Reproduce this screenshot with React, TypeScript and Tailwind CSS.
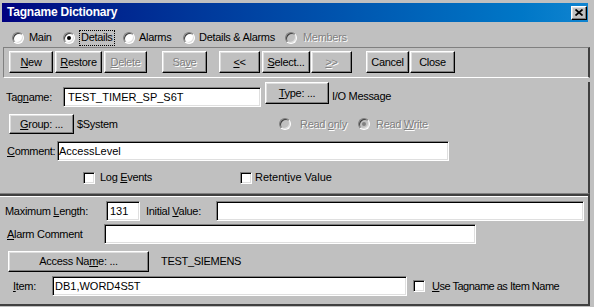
import type { ReactNode } from 'react'

const raised =
  'border border-t-white border-l-white border-r-black border-b-black shadow-[inset_-1px_-1px_#808080,inset_1px_1px_#dfdfdf]'
const sunken =
  'border border-t-[#808080] border-l-[#808080] border-r-white border-b-white shadow-[inset_1px_1px_#000,inset_-1px_-1px_#dfdfdf]'
const dim = 'text-[#808080] [text-shadow:1px_1px_0_#fff]'

function Btn({ children, className = '', disabled }: { children: ReactNode; className?: string; disabled?: boolean }) {
  return (
    <div
      className={`flex items-center justify-center shrink-0 bg-[#c0c0c0] ${raised} ${disabled ? dim : ''} ${className}`}
    >
      {children}
    </div>
  )
}

function Field({ value, className = '' }: { value?: string; className?: string }) {
  return (
    <div className={`flex items-center shrink-0 h-[20px] bg-white tracking-normal ${sunken} ${className}`}>
      {value}
    </div>
  )
}

function Radio({ checked, disabled }: { checked?: boolean; disabled?: boolean }) {
  return (
    <span
      className={`relative block w-[12px] h-[12px] rounded-full shrink-0 border border-t-[#808080] border-l-[#808080] border-r-white border-b-white shadow-[inset_1px_1px_0_#404040,inset_-1px_-1px_0_#dfdfdf] ${
        disabled ? 'bg-[#c0c0c0]' : 'bg-white'
      }`}
    >
      {checked && (
        <span
          className={`absolute left-[3px] top-[3px] w-[4px] h-[4px] rounded-full ${disabled ? 'bg-[#808080]' : 'bg-black'}`}
        />
      )}
    </span>
  )
}

function Check() {
  return <span className={`block w-[12px] h-[12px] shrink-0 bg-white ${sunken}`} />
}

export default function App() {
  return (
    <div className="w-[594px] h-[307px] bg-[#c0c0c0] overflow-hidden text-[11px] leading-[13px] text-black tracking-[-0.3px] font-['Liberation_Sans',Arial,sans-serif]">
      {/* title bar */}
      <div className="pt-[3px] pl-[2px] pr-[6px]">
        <div className="h-[19px] flex items-center bg-gradient-to-r from-[#000080] to-[#1084d0] pl-[5px] pr-[1px]">
          <span className="flex-1 text-white font-bold text-[12px] tracking-[-0.2px]">Tagname Dictionary</span>
          <Btn className="w-[16px] h-[14px]">
            <svg width="8" height="7" viewBox="0 0 8 7">
              <path d="M0.5 0.5 L7.5 6.5 M7.5 0.5 L0.5 6.5" stroke="#000" strokeWidth="1.7" />
            </svg>
          </Btn>
        </div>
      </div>

      {/* view radios */}
      <div className="flex items-center h-[19px] mt-[6px] pl-[12px]">
        <div className="flex items-center w-[51px]">
          <Radio />
          <span className="ml-[5px]">Main</span>
        </div>
        <div className="flex items-center w-[60px]">
          <Radio checked />
          <span className="ml-[4px] h-[16px] px-[1px] flex items-center border border-dotted border-black">Details</span>
        </div>
        <div className="flex items-center w-[60px]">
          <Radio />
          <span className="ml-[4px]">Alarms</span>
        </div>
        <div className="flex items-center w-[102px]">
          <Radio />
          <span className="ml-[4px]">Details &amp; Alarms</span>
        </div>
        <div className="flex items-center">
          <Radio disabled />
          <span className={`ml-[6px] ${dim}`}>Members</span>
        </div>
      </div>

      {/* toolbar */}
      <div className="ml-[3px] w-[587px] h-[31px] border-t border-l border-t-[#808080] border-l-[#808080] border-b border-b-white border-r-2 border-r-[#404040] pt-[3px] pl-[5px] flex">
        <Btn className="w-[44px] h-[22px]">
          <span><u>N</u>ew</span>
        </Btn>
        <Btn className="w-[47px] h-[22px] ml-[2px]">
          <span><u>R</u>estore</span>
        </Btn>
        <Btn className="w-[43px] h-[22px] ml-[2px]" disabled>
          <span><u>D</u>elete</span>
        </Btn>
        <Btn className="w-[45px] h-[22px] ml-[15px]" disabled>
          <span>Sa<u>v</u>e</span>
        </Btn>
        <Btn className="w-[41px] h-[22px] ml-[12px]">
          <span><u>&lt;</u>&lt;</span>
        </Btn>
        <Btn className="w-[48px] h-[22px] ml-[2px]">
          <span><u>S</u>elect...</span>
        </Btn>
        <Btn className="w-[41px] h-[22px] ml-[1px]" disabled>
          <span><u>&gt;</u>&gt;</span>
        </Btn>
        <Btn className="w-[43px] h-[22px] ml-[14px]">
          <span>Cancel</span>
        </Btn>
        <Btn className="w-[45px] h-[22px] ml-[1px]">
          <span>Close</span>
        </Btn>
      </div>

      {/* tag details */}
      <div className="w-[590px] h-[112px] border-r-2 border-r-[#404040] border-b border-b-[#808080]">
        <div className="flex items-start h-[25px] mt-[4px]">
          <span className="ml-[6px] w-[57px] mt-[9px]">
            Tag<u>n</u>ame:
          </span>
          <Field value="TEST_TIMER_SP_S6T" className="w-[198px] mt-[5px] pl-[4px]" />
          <Btn className="w-[64px] h-[22px] ml-[4px]">
            <span><u>T</u>ype: ...</span>
          </Btn>
          <span className="ml-[3px] mt-[8px]">I/O Message</span>
        </div>

        <div className="flex items-center h-[20px] mt-[7px]">
          <Btn className="w-[65px] h-[20px] ml-[9px]">
            <span><u>G</u>roup: ...</span>
          </Btn>
          <span className="ml-[3px] w-[202px]">$System</span>
          <Radio disabled />
          <span className={`ml-[9px] w-[58px] ${dim}`}>
            Read <u>o</u>nly
          </span>
          <Radio checked disabled />
          <span className={`ml-[6px] ${dim}`}>
            Read <u>W</u>rite
          </span>
        </div>

        <div className="flex items-center h-[20px] mt-[7px]">
          <span className="ml-[7px] w-[50px]">
            <u>C</u>omment:
          </span>
          <Field value="AccessLevel" className="w-[392px] pl-[1px]" />
        </div>

        <div className="flex items-center h-[13px] mt-[10px]">
          <div className="flex items-center ml-[83px] w-[157px]">
            <Check />
            <span className="ml-[5px]">
              Log <u>E</u>vents
            </span>
          </div>
          <Check />
          <span className="ml-[3px] tracking-[0px]">
            Retent<u>i</u>ve Value
          </span>
        </div>
      </div>

      {/* io section */}
      <div className="w-[590px] h-[112px] border-t-2 border-t-[#404040] border-r-2 border-r-[#404040] border-b-2 border-b-[#404040] shadow-[inset_0_1px_0_#fff]">
        <div className="flex items-center h-[20px] mt-[5px]">
          <span className="ml-[5px] w-[101px]">
            Maximum <u>L</u>ength:
          </span>
          <Field value="131" className="w-[34px] pl-[3px]" />
          <span className="ml-[6px] w-[70px]">
            Initial <u>V</u>alue:
          </span>
          <Field className="w-[368px]" />
        </div>

        <div className="flex items-center h-[20px] mt-[3px]">
          <span className="ml-[7px] w-[97px]">
            <u>A</u>larm Comment
          </span>
          <Field className="w-[372px]" />
        </div>

        <div className="flex items-center h-[21px] mt-[7px]">
          <Btn className="w-[141px] h-[21px] ml-[8px]">
            <span>
              Access Na<u>m</u>e: ...
            </span>
          </Btn>
          <span className="ml-[12px] tracking-[-0.3px]">TEST_SIEMENS</span>
        </div>

        <div className="flex items-center h-[20px] mt-[4px]">
          <span className="ml-[13px] w-[39px]">
            <u>I</u>tem:
          </span>
          <Field value="DB1,WORD4S5T" className="w-[355px] pl-[2px]" />
          <span className="ml-[6px]">
            <Check />
          </span>
          <span className="ml-[7px] tracking-[-0.5px]">
            <u>U</u>se Tagname as Item Name
          </span>
        </div>
      </div>
    </div>
  )
}
